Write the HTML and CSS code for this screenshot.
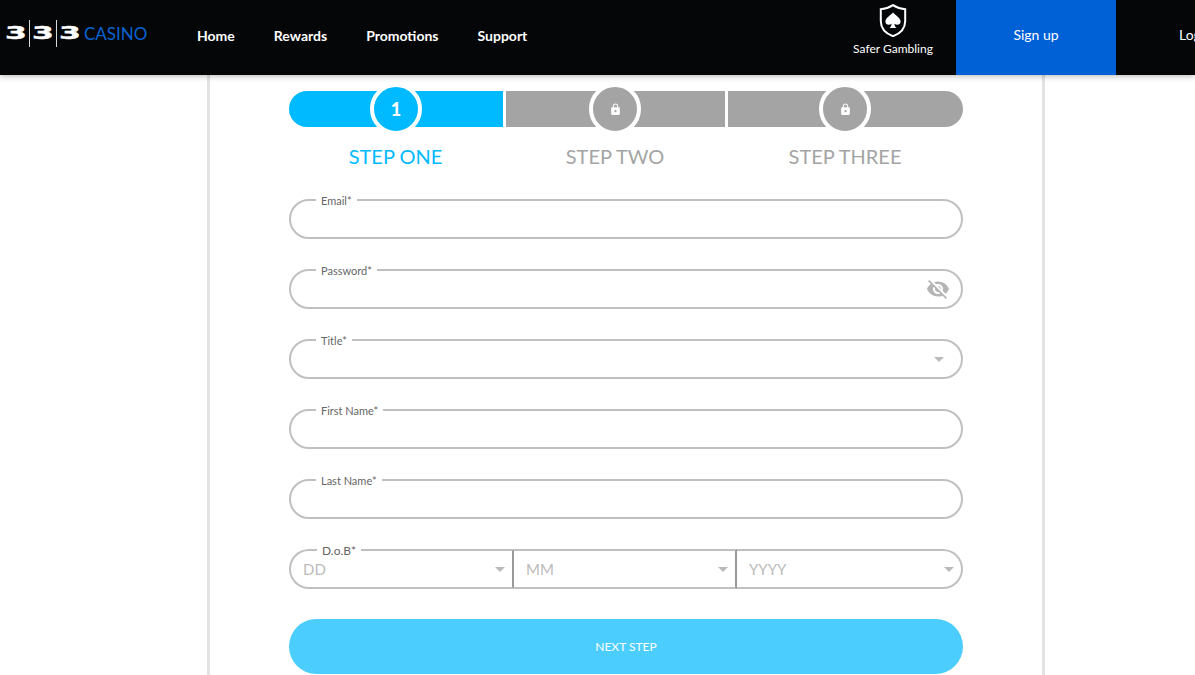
FILE: index.html
```html
<!DOCTYPE html>
<html lang="en">
<head>
    <meta charset="UTF-8">
    <meta name="viewport" content="width=device-width, initial-scale=1.0">
    <title>333 Casino - Sign up</title>
    <link rel="stylesheet" href="styles.css">
</head>
<body>
    <header class="topbar">
        <a class="logo" href="#">
            <span class="logo-digit"><b>3</b></span>
            <span class="logo-digit"><b>3</b></span>
            <span class="logo-digit"><b>3</b></span>
            <span class="logo-word">CASINO</span>
        </a>
        <nav class="main-nav">
            <a href="#">Home</a>
            <a href="#">Rewards</a>
            <a href="#">Promotions</a>
            <a href="#">Support</a>
        </nav>
        <a class="safer" href="#">
            <svg class="safer-icon" width="28" height="33" viewBox="0 0 28 33">
                <path d="M14 1.2 C10 3.8 6 5 1.8 5.2 V17 C1.8 24.4 7 29.6 14 32.2 C21 29.6 26.2 24.4 26.2 17 V5.2 C22 5 18 3.8 14 1.2 Z" fill="none" stroke="#fff" stroke-width="2"/>
                <path d="M14 8.6 C16.2 11.6 21.6 13.6 21.6 17.8 C21.6 20.6 18 21.6 15.4 19.8 C15.6 21.6 16.2 23 17.6 24 H10.4 C11.8 23 12.4 21.6 12.6 19.8 C10 21.6 6.4 20.6 6.4 17.8 C6.4 13.6 11.8 11.6 14 8.6 Z" fill="#fff"/>
            </svg>
            <span>Safer Gambling</span>
        </a>
        <a class="signup" href="#">Sign up</a>
        <a class="login" href="#">Log in</a>
    </header>

    <main class="panel">
        <div class="form-wrap">
            <div class="steps">
                <div class="step step-one active">
                    <div class="step-bar"><span class="step-dot">1</span></div>
                    <div class="step-name">STEP ONE</div>
                </div>
                <div class="step step-two">
                    <div class="step-bar">
                        <span class="step-dot">
                            <svg class="lock" width="13" height="13" viewBox="0 0 24 24"><path fill="#fff" d="M18 8h-1V6c0-2.76-2.24-5-5-5S7 3.24 7 6v2H6c-1.1 0-2 .9-2 2v10c0 1.1.9 2 2 2h12c1.1 0 2-.9 2-2V10c0-1.1-.9-2-2-2zm-6 9c-1.1 0-2-.9-2-2s.9-2 2-2 2 .9 2 2-.9 2-2 2zm3.1-9H8.9V6c0-1.71 1.39-3.1 3.1-3.1 1.71 0 3.1 1.39 3.1 3.1v2z"/></svg>
                        </span>
                    </div>
                    <div class="step-name">STEP TWO</div>
                </div>
                <div class="step step-three">
                    <div class="step-bar">
                        <span class="step-dot">
                            <svg class="lock" width="13" height="13" viewBox="0 0 24 24"><path fill="#fff" d="M18 8h-1V6c0-2.76-2.24-5-5-5S7 3.24 7 6v2H6c-1.1 0-2 .9-2 2v10c0 1.1.9 2 2 2h12c1.1 0 2-.9 2-2V10c0-1.1-.9-2-2-2zm-6 9c-1.1 0-2-.9-2-2s.9-2 2-2 2 .9 2 2-.9 2-2 2zm3.1-9H8.9V6c0-1.71 1.39-3.1 3.1-3.1 1.71 0 3.1 1.39 3.1 3.1v2z"/></svg>
                        </span>
                    </div>
                    <div class="step-name">STEP THREE</div>
                </div>
            </div>

            <form class="signup-form">
                <div class="field">
                    <label for="email">Email*</label>
                    <input type="email" id="email">
                </div>
                <div class="field">
                    <label for="password">Password*</label>
                    <input type="password" id="password">
                    <svg class="eye" width="24" height="24" viewBox="0 0 24 24"><path fill="#b5b5b5" d="M12 7c2.76 0 5 2.24 5 5 0 .65-.13 1.26-.36 1.83l2.92 2.92c1.51-1.26 2.7-2.89 3.43-4.75-1.73-4.39-6-7.5-11-7.5-1.4 0-2.74.25-3.98.7l2.16 2.16C10.74 7.13 11.35 7 12 7zM2 4.27l2.28 2.28.46.46C3.08 8.3 1.78 10.02 1 12c1.73 4.39 6 7.5 11 7.5 1.55 0 3.03-.3 4.38-.84l.42.42L19.73 22 21 20.73 3.27 3 2 4.27zM7.53 9.8l1.55 1.55c-.05.21-.08.43-.08.65 0 1.66 1.34 3 3 3 .22 0 .44-.03.65-.08l1.55 1.55c-.67.33-1.41.53-2.2.53-2.76 0-5-2.24-5-5 0-.79.2-1.53.53-2.2zm4.31-.78l3.15 3.15.02-.16c0-1.66-1.34-3-3-3l-.17.01z"/></svg>
                </div>
                <div class="field has-arrow">
                    <label for="title">Title*</label>
                    <select id="title"><option></option></select>
                </div>
                <div class="field">
                    <label for="firstName">First Name*</label>
                    <input type="text" id="firstName">
                </div>
                <div class="field">
                    <label for="lastName">Last Name*</label>
                    <input type="text" id="lastName">
                </div>
                <div class="field dob">
                    <label for="dobDay">D.o.B*</label>
                    <div class="dob-part dob-day has-arrow">
                        <select id="dobDay"><option>DD</option></select>
                    </div>
                    <div class="dob-part dob-month has-arrow">
                        <select id="dobMonth"><option>MM</option></select>
                    </div>
                    <div class="dob-part dob-year has-arrow">
                        <select id="dobYear"><option>YYYY</option></select>
                    </div>
                </div>
                <button type="button" class="next-btn">NEXT STEP</button>
            </form>
        </div>
    </main>
</body>
</html>
```

FILE: styles.css
```css
html, body {
    margin: 0;
    height: 675px;
    overflow: hidden;
}
body {
    font-family: 'Lato', sans-serif;
    background-color: #fff;
}
a {
    text-decoration: none;
    color: #fff;
}

/* header */
.topbar {
    position: relative;
    z-index: 2;
    display: flex;
    align-items: stretch;
    height: 75px;
    background-color: #050608;
    box-shadow: 0 1px 6px rgba(0, 0, 0, 0.3);
    white-space: nowrap;
}
.topbar > * {
    flex-shrink: 0;
}
.logo {
    display: flex;
    align-items: center;
    width: 197px;
    height: 66px;
    padding-left: 3px;
    box-sizing: border-box;
}
.logo-digit {
    display: block;
    width: 26px;
    height: 27px;
    border-right: 1px solid #d8d8d8;
    text-align: center;
}
.logo-digit:nth-child(3) {
    border-right: none;
    margin-right: 1px;
}
.logo-digit b {
    display: inline-block;
    font-family: 'DejaVu Sans', sans-serif;
    font-size: 17px;
    font-weight: bold;
    line-height: 27px;
    transform: scaleX(1.85);
    -webkit-text-stroke: 0.4px #fff;
    color: #fff;
}
.logo-word {
    font-size: 17px;
    color: #0a62d2;
}
.main-nav {
    display: flex;
    align-items: center;
    gap: 39px;
    width: 656px;
    padding-bottom: 4px;
    box-sizing: border-box;
    font-size: 14px;
    font-weight: bold;
}
.safer {
    display: flex;
    flex-direction: column;
    align-items: center;
    width: 80px;
    margin-right: 23px;
    padding-top: 4px;
    font-size: 12px;
    box-sizing: border-box;
}
.safer-icon {
    margin-bottom: 4px;
}
.signup {
    display: flex;
    align-items: center;
    justify-content: center;
    width: 160px;
    background-color: #0060d6;
    font-size: 14px;
    padding-bottom: 6px;
    box-sizing: border-box;
}
.login {
    display: flex;
    align-items: center;
    margin-left: 63px;
    font-size: 14px;
    padding-bottom: 6px;
}

/* white panel */
.panel {
    width: 838px;
    height: 600px;
    margin-left: 207px;
    box-sizing: border-box;
    border-left: 3px solid #e3e3e3;
    border-right: 3px solid #e3e3e3;
    padding: 16px 79px 0;
}

/* steps */
.steps {
    display: flex;
    gap: 3px;
}
.step-one { width: 214px; }
.step-two { width: 219px; }
.step-three { width: 235px; }
.step-bar {
    position: relative;
    height: 36px;
    background-color: #a4a4a4;
}
.step-one .step-bar {
    border-radius: 18px 0 0 18px;
}
.step-three .step-bar {
    border-radius: 0 18px 18px 0;
}
.active .step-bar,
.active .step-dot {
    background-color: #00baff;
}
.step-dot {
    position: absolute;
    top: -8px;
    left: 50%;
    width: 44px;
    height: 44px;
    margin-left: -26px;
    border: 4px solid #fff;
    border-radius: 50%;
    background-color: #a4a4a4;
    display: flex;
    align-items: center;
    justify-content: center;
    color: #fff;
    font-weight: 900;
    font-size: 18px;
}
.step-two .step-dot,
.step-three .step-dot {
    margin-left: -27px;
}
.lock {
    margin-left: 1px;
}
.step-name {
    margin-top: 16px;
    padding-right: 1px;
    text-align: center;
    font-size: 20px;
    line-height: 26px;
    color: #a4a4a4;
}
.active .step-name {
    color: #00baff;
}

/* form */
.signup-form {
    margin-top: 30px;
}
.field {
    position: relative;
    height: 40px;
    margin-bottom: 30px;
}
.field label {
    position: absolute;
    top: -5px;
    left: 27px;
    padding: 0 5px;
    background-color: #fff;
    font-size: 11px;
    line-height: 14px;
    color: #666;
    z-index: 1;
}
.field input,
.field select {
    display: block;
    width: 100%;
    height: 40px;
    box-sizing: border-box;
    border: 2px solid #c0c0c0;
    border-radius: 20px;
    padding: 0 12px;
    background-color: #fff;
    font-family: 'Lato', sans-serif;
    font-size: 15px;
    color: #bbb;
    outline: none;
    appearance: none;
}
.has-arrow {
    position: relative;
}
.has-arrow::after {
    content: "";
    position: absolute;
    top: 18px;
    right: 19px;
    border-left: 5.5px solid transparent;
    border-right: 5.5px solid transparent;
    border-top: 5px solid #bbb;
}
.eye {
    position: absolute;
    top: 8px;
    right: 13px;
}

/* date of birth */
.dob {
    display: flex;
}
.dob label {
    left: 28px;
    font-size: 12px;
}
.dob-day { width: 225px; }
.dob-month { width: 223px; }
.dob-year { width: 226px; }
.dob .dob-part select {
    border-radius: 0;
    border-left: 0;
    border-right: 2px solid #999;
    padding-left: 12px;
    padding-bottom: 1px;
}
.dob .dob-day select {
    border-left: 2px solid #c0c0c0;
    border-radius: 20px 0 0 20px;
}
.dob .dob-year select {
    border-right: 2px solid #c0c0c0;
    border-radius: 0 20px 20px 0;
}
.dob-part.has-arrow::after {
    right: 9px;
}

.next-btn {
    display: block;
    width: 100%;
    height: 55px;
    border: none;
    border-radius: 28px;
    background-color: #4bcdfe;
    color: #fff;
    font-family: 'Lato', sans-serif;
    font-size: 12px;
}
```
